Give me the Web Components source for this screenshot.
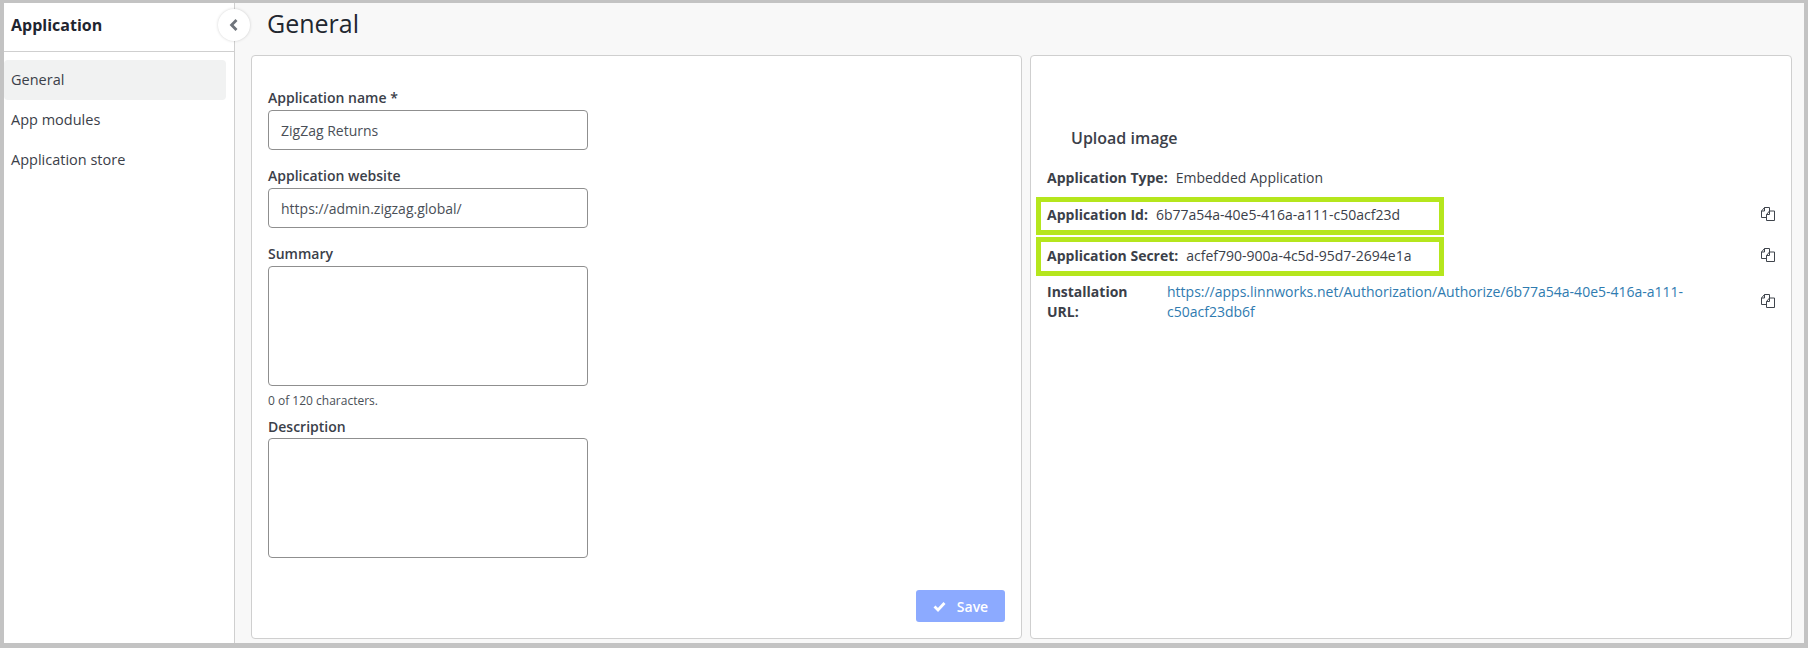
<!DOCTYPE html>
<html><head><meta charset="utf-8"><title>General</title>
<style>
html,body{margin:0;padding:0;height:648px;overflow:hidden}
body{background:#c3c3c3;font-family:"Open Sans","Noto Sans",sans-serif;color:#3b4049}
</style></head><body>
<app-shell>
  <side-nav slot="nav" title-text="Application">
    <nav-item active>General</nav-item>
    <nav-item>App modules</nav-item>
    <nav-item>Application store</nav-item>
  </side-nav>
  <page-title slot="title">General</page-title>
  <app-card slot="left" style="--pad:30px 14px 0 16px;--w:771px">
    <form-field label="Application name *" value="ZigZag Returns"></form-field>
    <form-field label="Application website" value="https://admin.zigzag.global/"></form-field>
    <form-field label="Summary" area="120" hint="0 of 120 characters."></form-field>
    <form-field label="Description" area="120" lh="25"></form-field>
    <save-button></save-button>
  </app-card>
  <app-card slot="right" style="--pad:0 16px 0 16px;--w:762px">
    <upload-label>Upload image</upload-label>
    <info-row label="Application Type:" h="36">Embedded Application</info-row>
    <info-row label="Application Id:" h="38" mark="1,38" copy>6b77a54a-40e5-416a-a111-c50acf23d</info-row>
    <info-row label="Application Secret:" h="44" mark="3,39" copy>acfef790-900a-4c5d-95d7-2694e1a</info-row>
    <info-row label="Installation URL:" stacked copy><a-link>https://apps.linnworks.net/Authorization/Authorize/6b77a54a-40e5-416a-a111-c50acf23db6f</a-link></info-row>
  </app-card>
</app-shell>
<script>
function def(name,html,init){customElements.define(name,class extends HTMLElement{connectedCallback(){if(this.shadowRoot)return;const r=this.attachShadow({mode:'open'});r.innerHTML=html(this);init&&init(r,this);}});}
const esc=s=>(s||'').replace(/&/g,'&amp;').replace(/</g,'&lt;');
def('app-shell',()=>`<style>
:host{display:flex;box-sizing:border-box;height:648px;padding:3px 4px 5px 4px}
.nav{flex:none;width:231px;background:#fff;border-right:1px solid #cfcfcf;box-sizing:border-box;position:relative;z-index:1}
.main{flex:1;min-width:0;background:#f8f8f8;display:flex;flex-direction:column;padding:0 12px 4px 16px}
.cards{flex:1;display:flex;gap:8px;min-height:0}
</style><div class="nav"><slot name="nav"></slot></div><div class="main"><slot name="title"></slot><div class="cards"><slot name="left"></slot><slot name="right"></slot></div></div>`);
def('side-nav',h=>`<style>
:host{display:block}
.head{border-bottom:1px solid #cfcfcf;display:flex;align-items:center;padding:0 0 4px 7px;box-sizing:border-box;height:49px;font-size:16px;font-weight:700;color:#1f2530}
.list{padding-top:8px;display:flex;flex-direction:column}
.toggle{position:absolute;right:-16px;top:6px;width:32px;height:32px;border-radius:50%;background:#fff;box-shadow:0 0 3px rgba(0,0,0,.18);display:flex;align-items:center;justify-content:center}
</style><div class="head">${esc(h.getAttribute('title-text'))}</div><div class="list"><slot></slot></div>
<div class="toggle"><svg width="12" height="14" viewBox="0 0 12 14"><path d="M8.5 2 3.6 7l4.9 5" fill="none" stroke="#6f747b" stroke-width="2.8"/></svg></div>`);
def('nav-item',h=>`<style>
:host{display:flex;align-items:center;height:40px;width:222px;box-sizing:border-box;padding:0 0 2px 7px;font-size:14.5px;color:#3b4049;border-radius:4px}
:host([active]){background:#f1f2f2}
</style><slot></slot>`);
def('page-title',()=>`<style>:host{display:block;height:52px;box-sizing:border-box;padding-left:16px;font-size:25px;font-weight:500;color:#22272f;line-height:41px}</style><slot></slot>`);
def('app-card',()=>`<style>:host{display:block;box-sizing:border-box;height:100%;width:var(--w);background:#fff;border:1px solid #cfcfcf;border-radius:4px;padding:var(--pad);position:relative}</style><slot></slot>`);
def('form-field',h=>{const a=h.getAttribute('area'),v=h.getAttribute('value'),hint=h.getAttribute('hint');return `<style>
:host{display:block;width:320px}
label{display:block;font-size:14px;font-weight:600;color:#3b4049;line-height:${h.getAttribute('lh')||23}px;height:24px}
.box{box-sizing:border-box;width:320px;border:1px solid #8f8f8f;border-radius:4px;background:#fff;padding:0 12px;font-size:14px;color:#4a4f57;display:flex;align-items:center;height:${a?a:40}px;margin-bottom:${hint?0:a?0:14}px}
.hint{font-size:12px;line-height:14px;margin-top:8px;margin-bottom:6px;color:#4a4f57}
</style><label>${esc(h.getAttribute('label'))}</label><div class="box">${esc(v)}</div>${hint?`<div class="hint">${esc(hint)}</div>`:''}`});
def('save-button',()=>`<style>
:host{position:absolute;right:16px;bottom:16px;width:89px;height:32px;border-radius:3px;background:#8caaff;color:#fff;font-size:14px;font-weight:600;display:flex;align-items:center;justify-content:center;gap:11px}
</style><svg width="13" height="11" viewBox="0 0 13 11"><path d="M1.5 5.5 5 9l6.5-7" fill="none" stroke="#fff" stroke-width="2.8"/></svg><span>Save</span>`);
def('upload-label',()=>`<style>:host{display:block;padding:71px 0 0 24px;box-sizing:border-box;font-size:16px;font-weight:600;color:#3b4049;line-height:22px;height:104px}</style><slot></slot>`);
const copy=`<svg class="copy" width="14" height="14" viewBox="0 0 14 14" fill="none" stroke="#3f444c" stroke-width="1"><path d="M5.5 10.5H.5V4L3.5.5H8.5V4"/><path d="M3.5.5V4H.5"/><path d="M5.5 13.5V7.5L8.5 4H13.5V13.5Z"/><path d="M8.5 4V7.5H5.5"/></svg>`;
def('info-row',h=>{const st=h.hasAttribute('stacked');const m=(h.getAttribute('mark')||'0,0').split(',');return `<style>
:host{display:block;position:relative;font-size:14px;color:#3b4049;line-height:20px;height:${h.getAttribute('h')||48}px;width:100%;${st?'padding-top:4px;':''}}
.row{display:flex;align-items:${st?'flex-start':'center'};height:${st?'auto':'100%'};}
b{font-weight:700;flex:none;${st?'width:90px;margin-right:30px;':'margin-right:8px;'}}
.val{${st?'width:530px':''}}
.copy{position:absolute;right:0;top:${st?'16px':'calc(50% - 8px)'}}
.mark{position:absolute;left:-11px;top:${m[0]}px;width:408px;height:${m[1]}px;box-sizing:border-box;border:5px solid #b5e61d}
</style><div class="row"><b>${esc(h.getAttribute('label'))}</b><div class="val"><slot></slot></div></div>${h.hasAttribute('copy')?copy:''}${h.hasAttribute('mark')?'<div class="mark"></div>':''}`});
def('a-link',()=>`<style>:host{color:#2f7bb0;display:inline}</style><slot></slot>`);
</script>
</body></html>
